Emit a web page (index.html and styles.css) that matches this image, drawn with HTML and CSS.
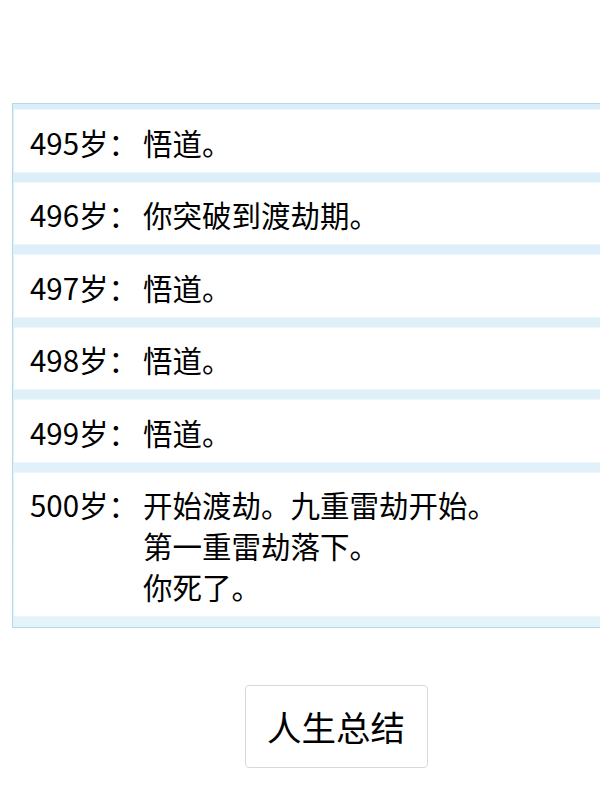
FILE: index.html
```html
<!DOCTYPE html>
<html lang="zh-CN">
<head>
<meta charset="utf-8">
<title>人生重开</title>
<link rel="stylesheet" href="styles.css">
</head>
<body>
<div class="page">
  <ul class="trajectory">
    <li class="event"><span class="age">495岁：</span><span class="desc">悟道。</span></li>
    <li class="event"><span class="age">496岁：</span><span class="desc">你突破到渡劫期。</span></li>
    <li class="event"><span class="age">497岁：</span><span class="desc">悟道。</span></li>
    <li class="event"><span class="age">498岁：</span><span class="desc">悟道。</span></li>
    <li class="event"><span class="age">499岁：</span><span class="desc">悟道。</span></li>
    <li class="event"><span class="age">500岁：</span><span class="desc">开始渡劫。九重雷劫开始。<br>第一重雷劫落下。<br>你死了。</span></li>
  </ul>
  <div class="actions">
    <button class="summary">人生总结</button>
  </div>
</div>
</body>
</html>
```
FILE: styles.css
```css
html, body {
  margin: 0;
  padding: 0;
  overflow: hidden;
  background: #fff;
}
body {
  font-family: "Microsoft YaHei", "Noto Sans CJK SC", "Noto Sans", sans-serif;
  color: #000;
}
.page {
  width: 648px;
  padding: 103px 12px 0 12px;
}
.trajectory {
  list-style: none;
  margin: 0;
  padding: 6px 0 11px 1px;
  border: 1px solid #b4dbe9;
  background: linear-gradient(#dbeef8, #e4f2fa);
  display: flex;
  flex-direction: column;
  gap: 11px;
}
.event {
  background: #fff;
  display: flex;
  padding: 11.5px 0 9.5px 16px;
  font-size: 29.5px;
  line-height: 40.6px;
  box-shadow: 0 1px 0 #ecf6fb, 0 -1px 0 #ecf6fb;
}
.age {
  flex: none;
  width: 113px;
}
.desc {
  flex: 1;
}
.actions {
  display: flex;
  justify-content: center;
  padding-top: 57px;
}
.summary {
  font-family: "Microsoft YaHei", "Noto Sans CJK SC", sans-serif;
  font-size: 34.5px;
  color: #000;
  background: #fff;
  border: 1px solid #d8d8d8;
  border-radius: 4px;
  width: 183px;
  height: 83px;
  padding: 0;
}
```
